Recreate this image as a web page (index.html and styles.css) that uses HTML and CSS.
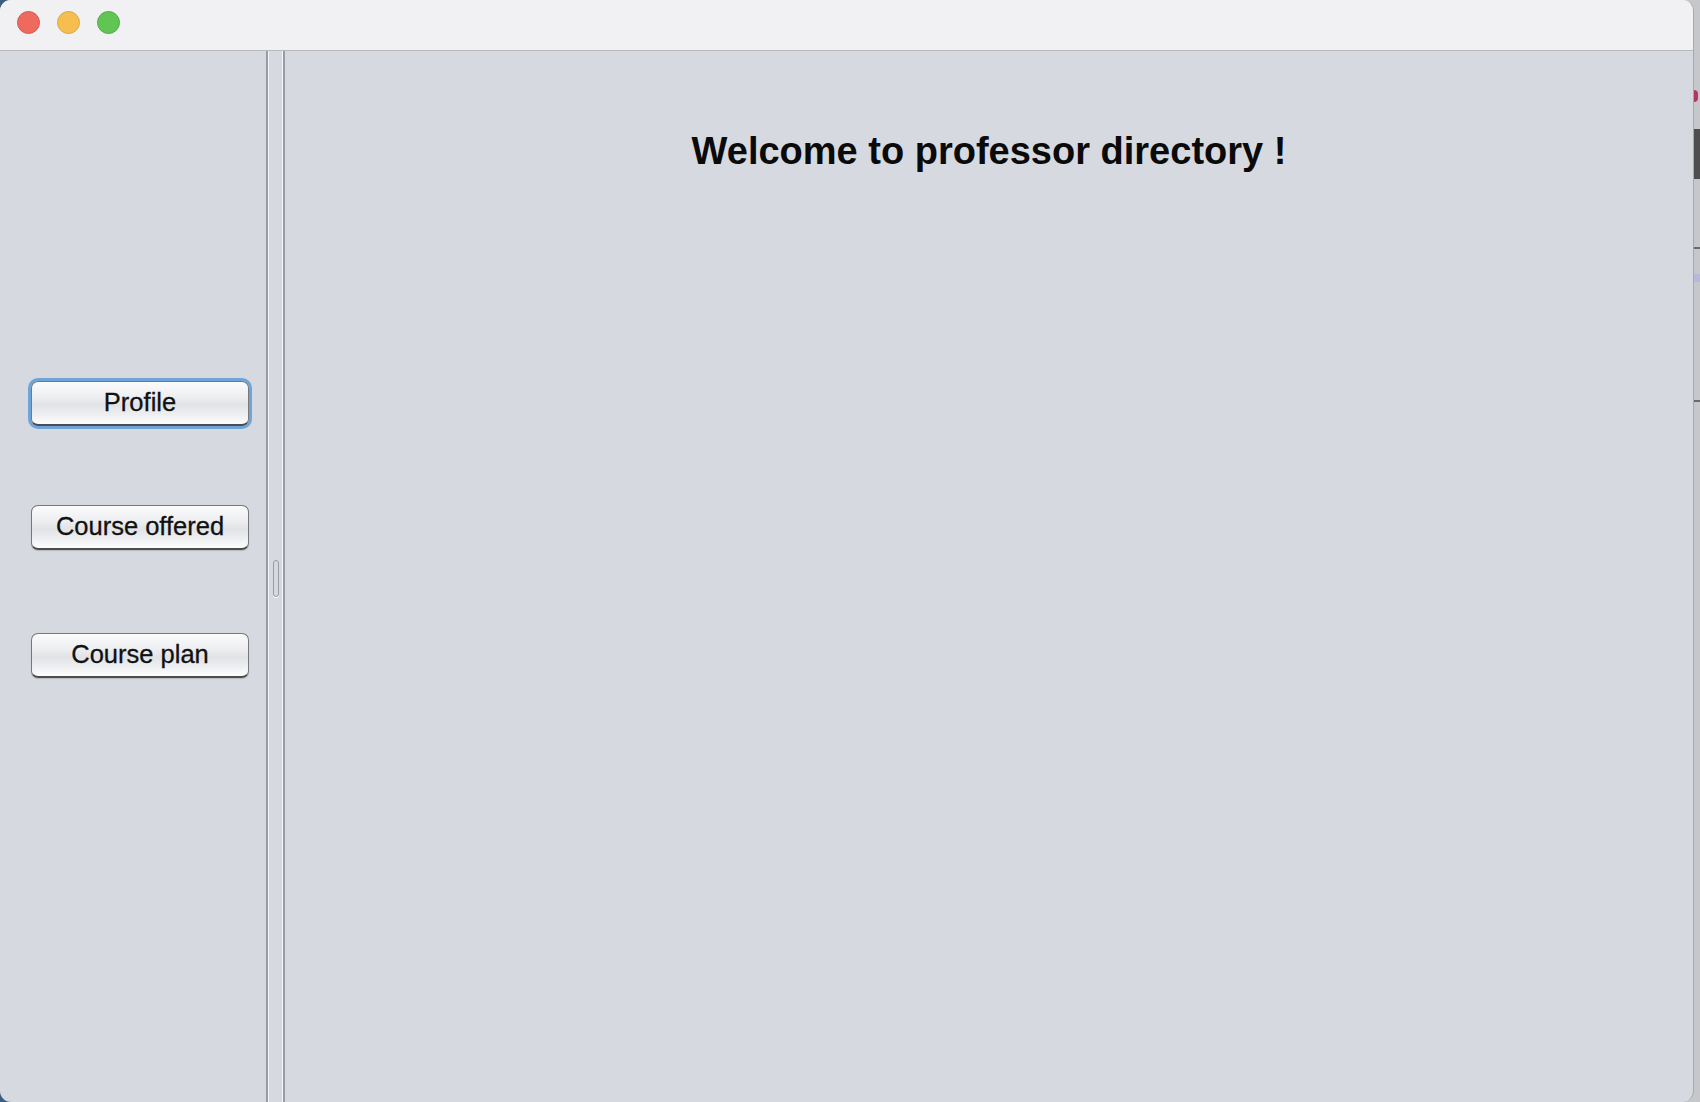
FILE: index.html
```html
<!DOCTYPE html>
<html lang="en">
<head>
    <meta charset="UTF-8">
    <meta name="viewport" content="width=device-width, initial-scale=1.0">
    <title>Professor Directory</title>
    <link rel="stylesheet" href="styles.css">
</head>
<body>
    <div class="desktop">
        <div class="window">
            <div class="titlebar">
                <span class="light red"></span>
                <span class="light yellow"></span>
                <span class="light green"></span>
            </div>
            <div class="content">
                <div class="sidebar">
                    <button class="btn btn-focus btn-profile">Profile</button>
                    <button class="btn btn-offered">Course offered</button>
                    <button class="btn btn-plan">Course plan</button>
                </div>
                <div class="splitter">
                    <div class="grip"></div>
                </div>
                <div class="main">
                    <h1 class="welcome">Welcome to professor directory !</h1>
                </div>
            </div>
        </div>
        <div class="desk-strip">
            <div class="strip-dot"></div>
            <div class="strip-dark"></div>
            <div class="strip-line"></div>
            <div class="strip-purple"></div>
            <div class="strip-line strip-line-low"></div>
        </div>
    </div>
</body>
</html>
```

FILE: styles.css
```css
html, body {
    margin: 0;
    padding: 0;
    height: 100%;
}
body {
    font-family: "Liberation Sans", Arial, sans-serif;
    background-color: #c9cacd;
    overflow: hidden;
}
.desktop {
    display: flex;
    height: 1102px;
    background: linear-gradient(to right, #3d5c82 0, #3d5c82 30px, #c7c8cb 30px);
}
.window {
    width: 1694px;
    height: 1102px;
    display: flex;
    flex-direction: column;
    background-color: #d6d9df;
    border-radius: 11px;
    overflow: hidden;
    border-right: 1px solid #a8a9ad;
    box-sizing: border-box;
}
.titlebar {
    height: 51px;
    flex: none;
    display: flex;
    align-items: center;
    gap: 17px;
    padding: 0 0 6px 17px;
    box-sizing: border-box;
    background-color: #f1f1f3;
    border-bottom: 1px solid #b8b9bd;
}
.light {
    width: 23px;
    height: 23px;
    border-radius: 50%;
    box-sizing: border-box;
}
.red {
    background-color: #ee6a5f;
    border: 1px solid #d9574d;
}
.yellow {
    background-color: #f6be4f;
    border: 1px solid #dfa63c;
}
.green {
    background-color: #61c554;
    border: 1px solid #4fad44;
}
.content {
    flex: 1;
    display: flex;
}
.sidebar {
    width: 268px;
    flex: none;
    display: flex;
    flex-direction: column;
    align-items: flex-start;
    padding-left: 31px;
    box-sizing: border-box;
    border-right: 2px solid #999ca4;
}
.btn {
    width: 218px;
    height: 45px;
    font-family: "Liberation Sans", Arial, sans-serif;
    font-size: 25.5px;
    color: #111;
    -webkit-text-stroke: 0.3px #111;
    padding: 0 0 1px 0;
    border: 1px solid #77787c;
    border-bottom: 2px solid #4c4d51;
    border-radius: 7px;
    background: linear-gradient(to bottom, #fbfbfc 0%, #eeeff1 35%, #e2e3e6 55%, #eff0f2 80%, #fdfdfd 100%);
    box-shadow: 0 1px 1px rgba(0, 0, 0, 0.15);
    cursor: pointer;
}
.btn-focus {
    box-shadow: 0 0 0 3px #6fa4d9;
}
.btn-profile {
    margin-top: 330px;
}
.btn-offered {
    margin-top: 79px;
}
.btn-plan {
    margin-top: 83px;
}
.splitter {
    width: 13px;
    flex: none;
    display: flex;
    align-items: center;
    justify-content: center;
    border-left: 1px solid #f4f5f7;
    border-right: 1px solid #f4f5f7;
    padding-top: 4px;
}
.grip {
    width: 6px;
    height: 37px;
    box-sizing: border-box;
    border: 1px solid #9a9ca2;
    border-radius: 3px;
    box-shadow: 0 1px 0 #ffffff;
    margin-left: 1px;
}
.main {
    flex: 1;
    border-left: 2px solid #999ca4;
    display: flex;
    flex-direction: column;
    align-items: center;
}
.welcome {
    margin: 78px 0 0 0;
    font-size: 38px;
    line-height: 44px;
    font-weight: bold;
    color: #0a0a0a;
}
.desk-strip {
    flex: 1;
    display: flex;
    flex-direction: column;
    background-color: #c6c7ca;
}
.strip-dot {
    height: 12px;
    margin-top: 90px;
    background-color: #b13a5a;
    border-radius: 0 6px 6px 0;
    width: 4px;
}
.strip-dark {
    height: 50px;
    margin-top: 27px;
    background-color: #4e4e50;
}
.strip-line {
    height: 2px;
    margin-top: 68px;
    background-color: #6a6a6c;
}
.strip-purple {
    height: 8px;
    margin-top: 25px;
    background-color: #b9b8dc;
}
.strip-line-low {
    margin-top: 118px;
}
```
